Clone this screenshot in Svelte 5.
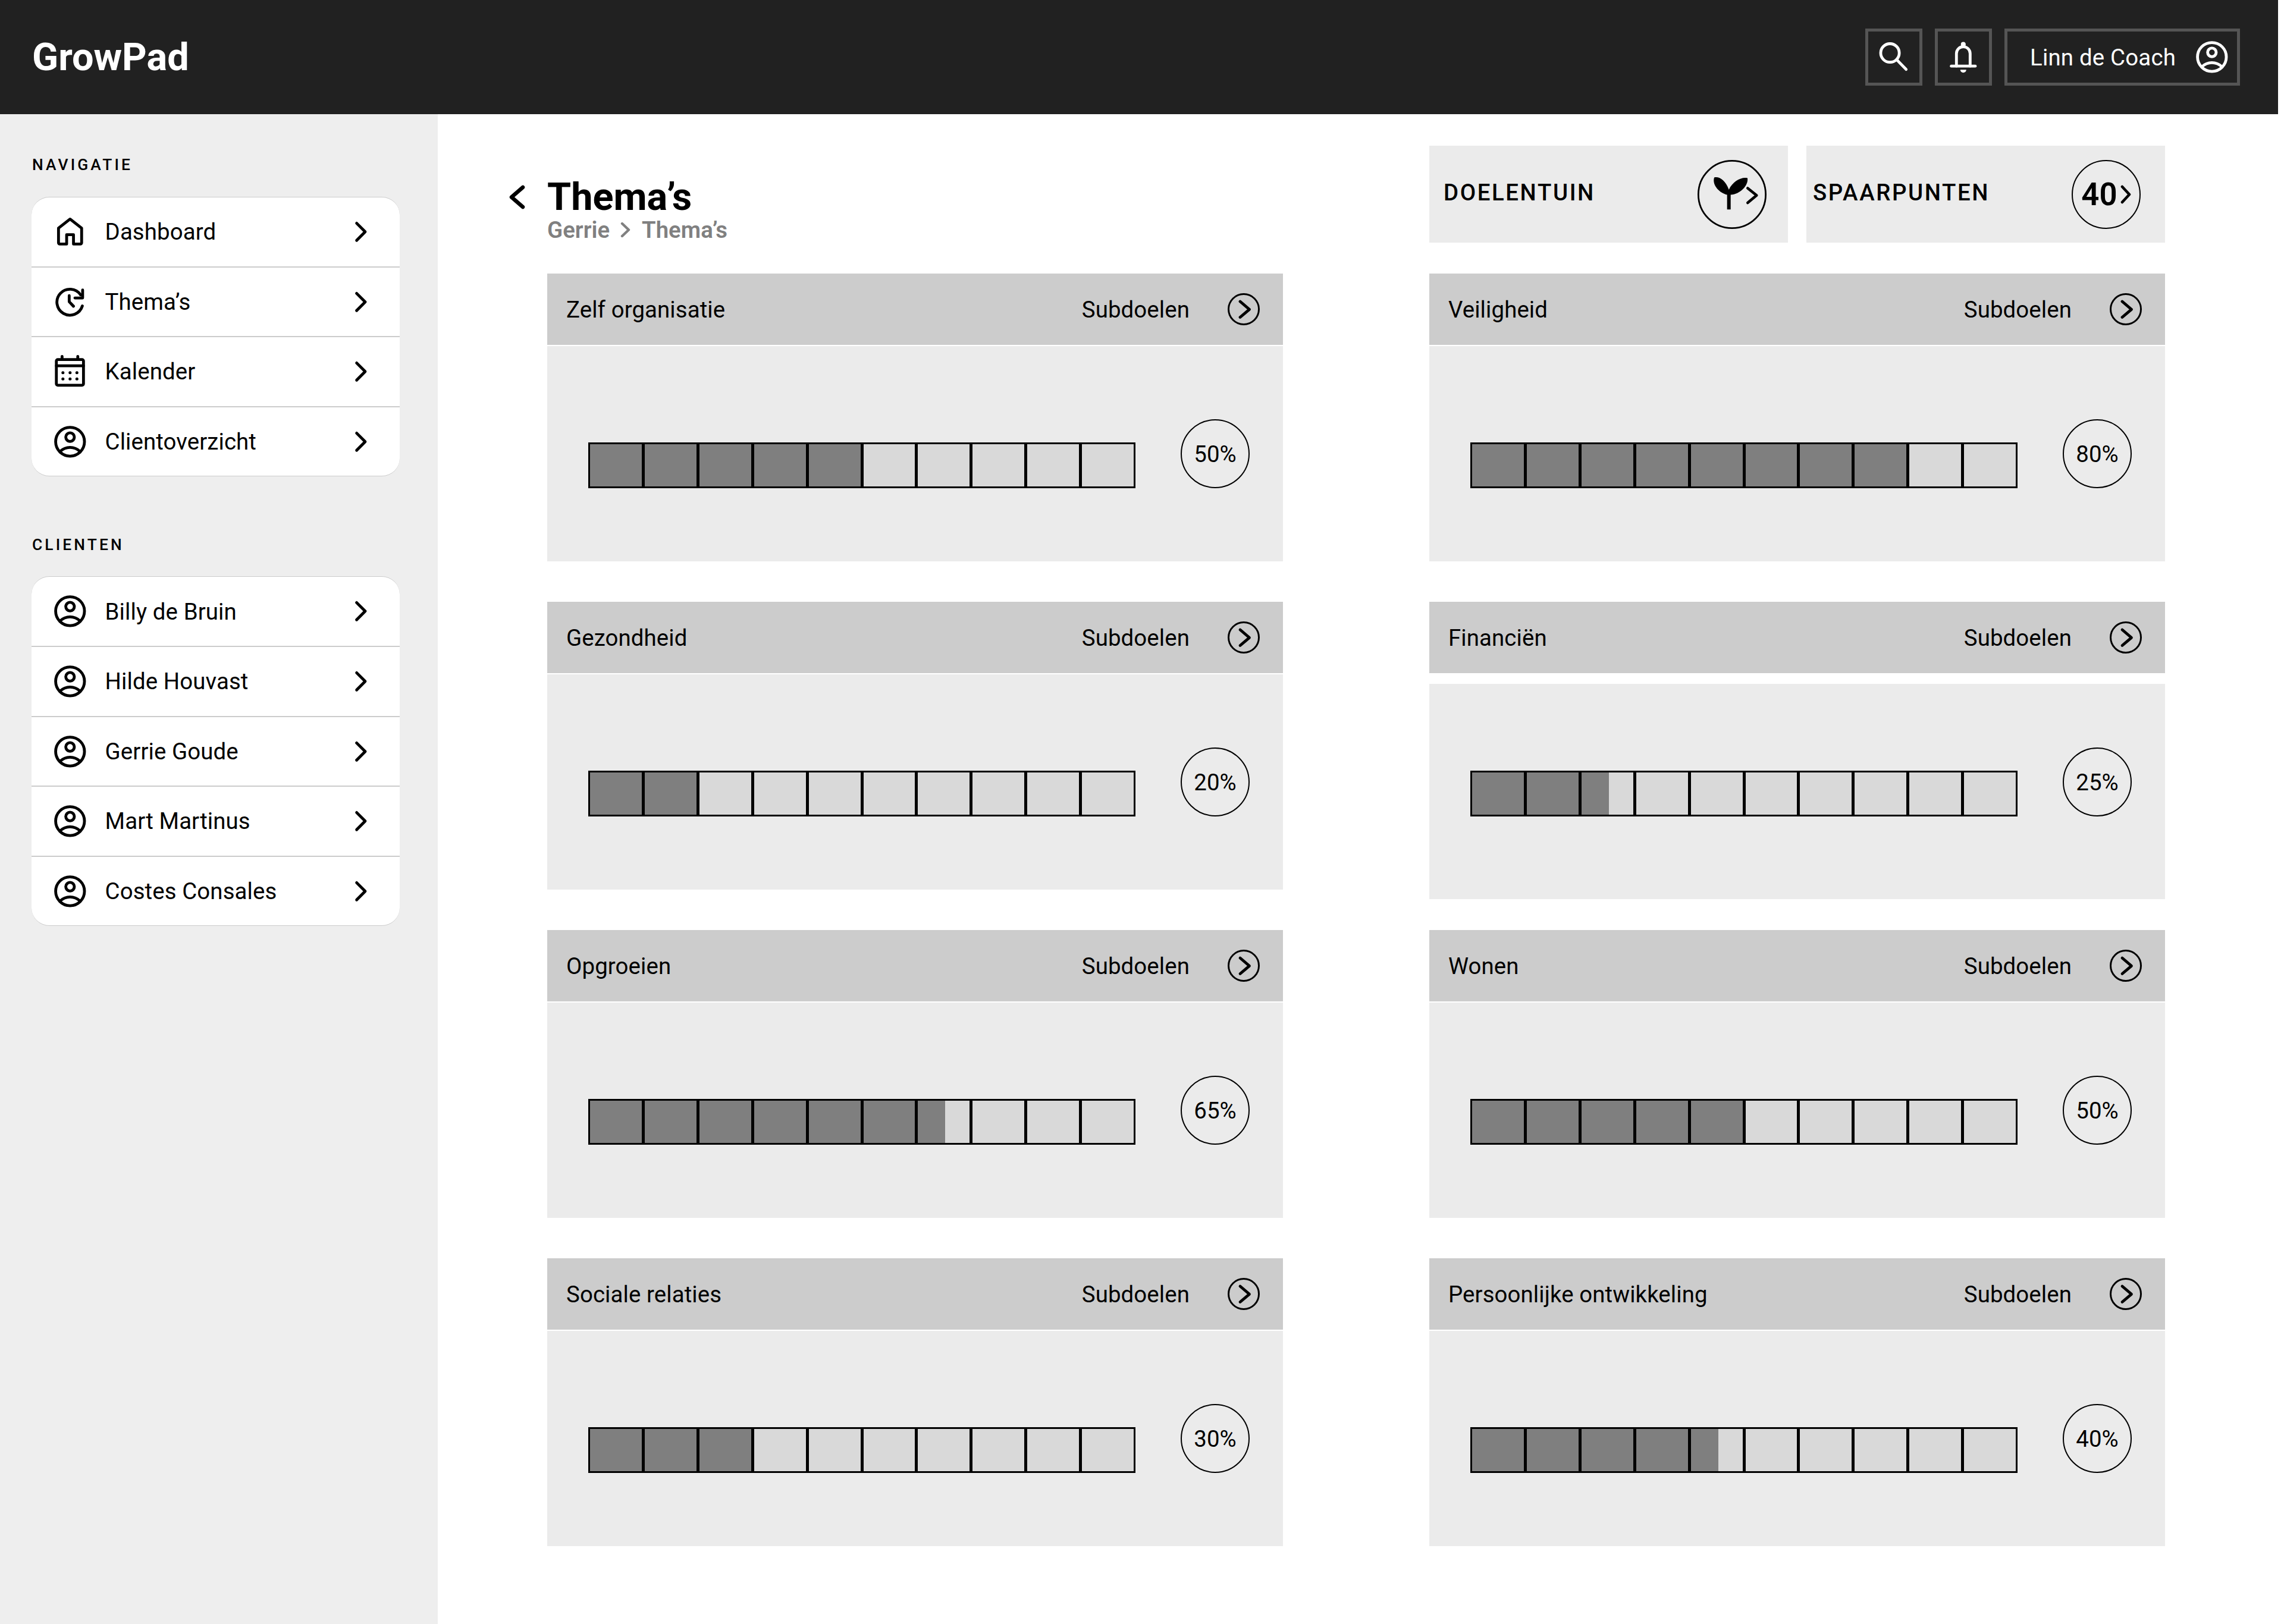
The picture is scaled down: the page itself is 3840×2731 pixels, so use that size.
<script>
  const navItems = [
    { label: "Dashboard", icon: "home" },
    { label: "Thema’s", icon: "history" },
    { label: "Kalender", icon: "calendar" },
    { label: "Clientoverzicht", icon: "user" },
  ];

  const clients = ["Billy de Bruin", "Hilde Houvast", "Gerrie Goude", "Mart Martinus", "Costes Consales"];

  // fill = number of filled blocks out of 10
  const themes = [
    { name: "Zelf organisatie", pct: 50, fill: 5 },
    { name: "Veiligheid", pct: 80, fill: 8 },
    { name: "Gezondheid", pct: 20, fill: 2 },
    { name: "Financiën", pct: 25, fill: 2.53, split: true },
    { name: "Opgroeien", pct: 65, fill: 6.53 },
    { name: "Wonen", pct: 50, fill: 5 },
    { name: "Sociale relaties", pct: 30, fill: 3 },
    { name: "Persoonlijke ontwikkeling", pct: 40, fill: 4.53 },
  ];

  const blocks = [0, 1, 2, 3, 4, 5, 6, 7, 8, 9];

  function blockFill(fill, i) {
    return Math.max(0, Math.min(1, fill - i)) * 100;
  }
</script>

{#snippet userIcon()}
  <svg class="icon" viewBox="0 0 24 24" fill="none" stroke="currentColor" stroke-width="2">
    <circle cx="12" cy="12" r="10.1" />
    <circle cx="12" cy="8.8" r="3" />
    <path d="M5 18.8C9 15 15 15 19 18.8" />
  </svg>
{/snippet}

{#snippet chevron()}
  <svg class="icon" viewBox="0 0 24 24" fill="none" stroke="currentColor" stroke-width="2" stroke-linecap="round" stroke-linejoin="round">
    <path d="M9 6l6 6-6 6" />
  </svg>
{/snippet}

{#snippet navIcon(name)}
  {#if name === "home"}
    <svg class="icon" viewBox="0 0 24 24" fill="none" stroke="currentColor" stroke-width="2" stroke-linejoin="round">
      <path d="M3.9 9.4L12 3.1l8.1 6.3v10.3a.9.9 0 0 1-.9.9h-4.8V14H9.6v6.6H4.8a.9.9 0 0 1-.9-.9z" />
    </svg>
  {:else if name === "history"}
    <svg class="icon" viewBox="0 0 24 24" fill="none" stroke="currentColor" stroke-width="2" stroke-linecap="round" stroke-linejoin="round">
      <path d="M20.6 14.8A9.1 9.1 0 1 1 19.4 7" />
      <path d="M20.8 3.6v5.6h-5.4" />
      <path d="M11.4 7.6v4.2l3 3.2" />
    </svg>
  {:else if name === "calendar"}
    <svg class="icon" viewBox="0 0 24 24" fill="none" stroke="currentColor" stroke-width="2" stroke-linecap="round" stroke-linejoin="round">
      <rect x="2.4" y="3.6" width="19" height="18" rx="1" />
      <path d="M2.4 8h19M6.4 1.4v2.2M17.4 1.4v2.2" />
      <g fill="currentColor" stroke="none">
        <circle cx="7" cy="12.8" r="1.05" />
        <circle cx="12" cy="12.8" r="1.05" />
        <circle cx="16.8" cy="12.8" r="1.05" />
        <circle cx="7" cy="17.2" r="1.05" />
        <circle cx="12" cy="17.2" r="1.05" />
        <circle cx="16.8" cy="17.2" r="1.05" />
      </g>
    </svg>
  {:else}
    {@render userIcon()}
  {/if}
{/snippet}

{#snippet roundArrow()}
  <svg class="round-arrow" viewBox="0 0 54 54" fill="none" stroke="currentColor" stroke-linecap="round" stroke-linejoin="round">
    <circle cx="27" cy="27" r="25.5" stroke-width="3" />
    <path d="M21 14l15.5 13.3L21 40.5" stroke-width="4.8" />
  </svg>
{/snippet}

<div class="app">
  <header class="topbar">
    <div class="logo">GrowPad</div>
    <div class="top-actions">
      <button class="top-btn" aria-label="Zoeken">
        <svg class="icon" viewBox="0 0 24 24" fill="none" stroke="currentColor" stroke-width="2" stroke-linecap="round">
          <circle cx="9.4" cy="9.2" r="6.5" />
          <path d="M14 13.8l6.7 6.9" />
        </svg>
      </button>
      <button class="top-btn" aria-label="Meldingen">
        <svg class="icon" viewBox="0 0 24 24" fill="none" stroke="currentColor" stroke-width="2" stroke-linecap="round" stroke-linejoin="round">
          <path d="M7.2 18.4V9.6a4.8 4.8 0 0 1 9.6 0v8.8" />
          <path d="M3.6 18.4h16.8" />
          <circle cx="12" cy="3.2" r="1.7" fill="currentColor" stroke="none" />
          <path d="M9.9 20.9h4.2a2.1 2.1 0 0 1-4.2 0z" fill="currentColor" stroke="none" />
        </svg>
      </button>
      <button class="top-btn user-btn">
        <span>Linn de Coach</span>
        {@render userIcon()}
      </button>
    </div>
  </header>

  <div class="layout">
    <aside class="sidebar">
      <h3 class="side-label">NAVIGATIE</h3>
      <ul class="side-card">
        {#each navItems as item}
          <li class="side-row">
            {@render navIcon(item.icon)}
            <span class="side-text">{item.label}</span>
            {@render chevron()}
          </li>
        {/each}
      </ul>

      <h3 class="side-label second">CLIENTEN</h3>
      <ul class="side-card">
        {#each clients as name}
          <li class="side-row">
            {@render userIcon()}
            <span class="side-text">{name}</span>
            {@render chevron()}
          </li>
        {/each}
      </ul>
    </aside>

    <main class="content">
      <div class="grid">
        <div class="page-head">
          <svg class="back" viewBox="0 0 28 41" fill="none" stroke="currentColor" stroke-width="6.5" stroke-linecap="round" stroke-linejoin="round">
            <path d="M24 4L5 20.5 24 37" />
          </svg>
          <div>
            <h1>Thema’s</h1>
            <div class="crumbs">
              <span>Gerrie</span>
              <svg class="crumb-sep" viewBox="0 0 20 27" fill="none" stroke="currentColor" stroke-width="4.4" stroke-linecap="round" stroke-linejoin="round">
                <path d="M4 3l11 10.5L4 24" />
              </svg>
              <span>Thema’s</span>
            </div>
          </div>
        </div>

        <div class="tiles">
          <div class="tile tile-garden">
            <span class="tile-title">DOELENTUIN</span>
            <svg class="big-circle" viewBox="0 0 116 116" fill="none" stroke="currentColor" stroke-linecap="round" stroke-linejoin="round">
              <circle cx="58" cy="58" r="56.6" stroke-width="2.8" />
              <path d="M28 29.5C36 27 47 34 52.7 50 59 36 74 28 84 30.5 86 43 71 58 55.7 58.5V83.3H49.7V58.5C38 56 24 43 28 29.5Z" fill="currentColor" stroke="none" />
              <path d="M84.3 47.5L99.3 59.5 84.3 72" stroke-width="4.6" />
            </svg>
          </div>
          <div class="tile tile-points">
            <span class="tile-title">SPAARPUNTEN</span>
            <div class="big-circle points">
              <span>40</span>
              <svg class="points-arrow" viewBox="0 0 18 32" fill="none" stroke="currentColor" stroke-width="4.6" stroke-linecap="round" stroke-linejoin="round">
                <path d="M3 3l12 13L3 29" />
              </svg>
            </div>
          </div>
        </div>

        {#each themes as theme}
          <section class="theme" class:split={theme.split}>
            <div class="theme-head">
              <span>{theme.name}</span>
              <div class="theme-link">
                <span>Subdoelen</span>
                {@render roundArrow()}
              </div>
            </div>
            <div class="theme-body">
              <div class="bar">
                {#each blocks as i}
                  <div class="block">
                    <div class="block-fill" style="width: {blockFill(theme.fill, i)}%"></div>
                  </div>
                {/each}
              </div>
              <div class="pct">{theme.pct}%</div>
            </div>
          </section>
        {/each}
      </div>
    </main>
  </div>
</div>

<style>
  :global(body) {
    margin: 0;
    background: #fff;
  }

  .app {
    width: 3830px;
    min-height: 2731px;
    display: flex;
    flex-direction: column;
    font-family: Roboto, "Liberation Sans", sans-serif;
    font-size: 38.4px;
    letter-spacing: 0.1px;
    color: #000;
  }

  .icon {
    width: 57.6px;
    height: 57.6px;
    flex: none;
    display: block;
  }

  /* top bar */
  .topbar {
    height: 192px;
    background: #212121;
    color: #fff;
    display: flex;
    align-items: center;
    justify-content: space-between;
    padding: 0 64px 0 54px;
    box-sizing: border-box;
  }

  .logo {
    font-size: 64.8px;
    font-weight: 700;
    letter-spacing: 0;
  }

  .top-actions {
    display: flex;
    gap: 21px;
  }

  .top-btn {
    width: 96px;
    height: 96px;
    box-sizing: border-box;
    border: 5px solid #555;
    background: none;
    color: #fff;
    padding: 0;
    display: flex;
    align-items: center;
    justify-content: center;
    font: inherit;
    letter-spacing: 0.2px;
  }

  .user-btn {
    width: 396px;
    justify-content: flex-start;
    padding-left: 38px;
    gap: 32px;
  }

  /* sidebar */
  .layout {
    flex: 1;
    display: flex;
  }

  .sidebar {
    width: 736px;
    flex: none;
    background: #eee;
    padding: 69px 64px 0 53px;
    box-sizing: border-box;
  }

  .side-label {
    margin: 0 0 38px 1px;
    font-size: 26.4px;
    line-height: 32px;
    font-weight: 500;
    letter-spacing: 4.1px;
  }

  .side-label.second {
    margin-top: 99px;
    margin-bottom: 37px;
  }

  .side-card {
    list-style: none;
    margin: 0;
    padding: 0;
    background: #fff;
    border-radius: 30px;
    overflow: hidden;
    border-top: 1px solid #ccc;
    border-bottom: 1px solid #ccc;
  }

  .side-row {
    height: 115.6px;
    display: flex;
    align-items: center;
    padding: 0 36px;
    gap: 30px;
  }

  .side-row + .side-row {
    border-top: 2px solid #ccc;
  }

  .side-text {
    flex: 1;
  }

  /* main */
  .content {
    flex: 1;
    padding: 53px 0 0 184px;
  }

  .grid {
    display: grid;
    grid-template-columns: 1237px 1237px;
    column-gap: 246px;
    row-gap: 52px;
  }

  .page-head {
    align-self: end;
    margin-left: -65px;
    display: flex;
    align-items: flex-start;
    gap: 37px;
  }

  .back {
    width: 28px;
    height: 41px;
    flex: none;
    margin-top: 13px;
  }

  h1 {
    margin: 2px 0 0;
    font-size: 64.8px;
    line-height: 62px;
    font-weight: 700;
    letter-spacing: 0;
  }

  .crumbs {
    margin-top: 2px;
    height: 44px;
    display: flex;
    align-items: center;
    gap: 17px;
    color: #808080;
    font-weight: 600;
    letter-spacing: 0;
  }

  .crumb-sep {
    width: 20px;
    height: 27px;
  }

  .tiles {
    display: flex;
    gap: 31px;
  }

  .tile {
    width: 603px;
    flex: none;
    height: 163px;
    background: #ebebeb;
    display: flex;
    align-items: center;
    justify-content: space-between;
    box-sizing: border-box;
  }

  .tile-garden {
    padding: 0 36px 0 24px;
  }

  .tile-points {
    padding: 0 41px 0 11px;
  }

  .tile-title {
    padding-bottom: 7px;
    font-weight: 500;
    letter-spacing: 2.6px;
  }

  .big-circle {
    width: 116px;
    height: 116px;
    flex: none;
    display: block;
  }

  .points {
    box-sizing: border-box;
    border: 2.8px solid #000;
    border-radius: 50%;
    display: flex;
    align-items: center;
    justify-content: center;
    gap: 5px;
    font-size: 52.8px;
    font-weight: 600;
    letter-spacing: 0;
  }

  .points-arrow {
    width: 18px;
    height: 32px;
  }

  .theme {
    padding-bottom: 16px;
  }

  .theme-head {
    height: 120px;
    background: #ccc;
    display: flex;
    align-items: center;
    justify-content: space-between;
    padding: 0 39px 0 32px;
  }

  .theme-link {
    display: flex;
    align-items: center;
    gap: 64px;
  }

  .round-arrow {
    width: 54px;
    height: 54px;
    display: block;
  }

  .theme-body {
    height: 362px;
    margin-top: 2px;
    background: #ebebeb;
    display: flex;
    align-items: flex-end;
    justify-content: space-between;
    padding: 123px 56px 123px 69px;
    box-sizing: border-box;
  }

  .split {
    padding-bottom: 0;
  }

  .split .theme-body {
    margin-top: 18px;
    padding: 107px 56px 139px 69px;
  }

  .bar {
    width: 920px;
    height: 77px;
    box-sizing: border-box;
    border: 3px solid #000;
    display: flex;
  }

  .block {
    flex: 1;
    background: #d9d9d9;
  }

  .block + .block {
    border-left: 5px solid #000;
  }

  .block-fill {
    height: 100%;
    background: #7f7f7f;
  }

  .pct {
    width: 116px;
    height: 116px;
    box-sizing: border-box;
    border: 2.8px solid #000;
    border-radius: 50%;
    display: flex;
    align-items: center;
    justify-content: center;
  }
</style>
